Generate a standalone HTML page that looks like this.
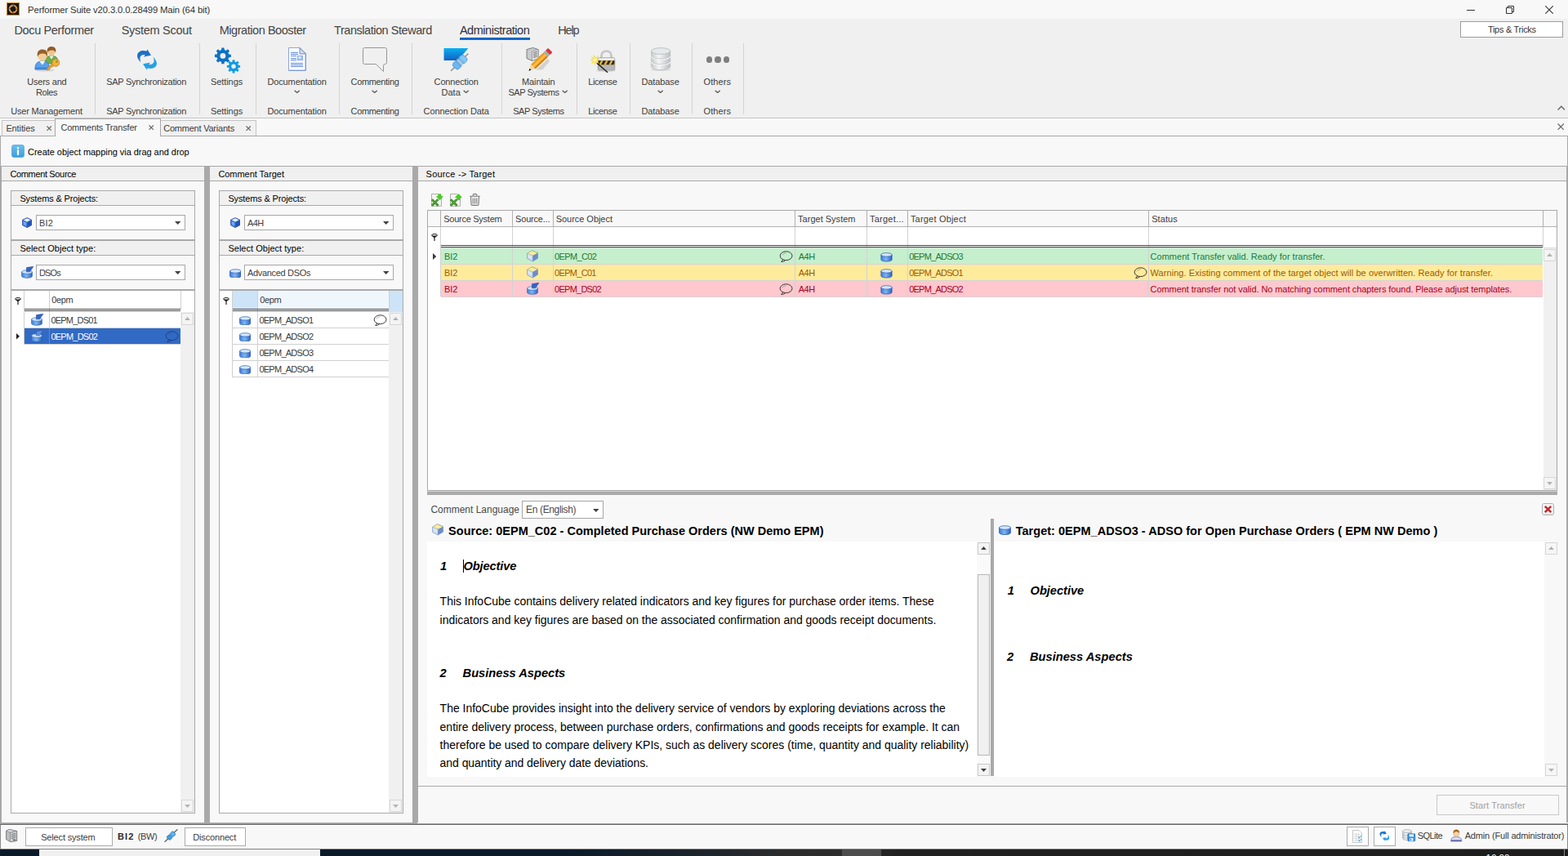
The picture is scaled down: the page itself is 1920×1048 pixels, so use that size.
<!DOCTYPE html>
<html lang="en"><head><meta charset="utf-8"><title>Performer Suite - Comments Transfer</title>
<style>
html,body{margin:0;padding:0;}
body{width:1920px;height:1048px;overflow:hidden;position:relative;background:#f8f8f8;font-family:"Liberation Sans",sans-serif;}
#app{position:absolute;left:0;top:0;width:1920px;height:1048px;overflow:hidden;}
#app div{position:absolute;box-sizing:border-box;}
.t{position:absolute;white-space:pre;line-height:1;display:block;}
.pb{display:inline-block;width:0;height:0;vertical-align:baseline;}
</style></head>
<body>

<svg width="0" height="0" style="position:absolute">
<defs>
<linearGradient id="gBlue" x1="0" y1="0" x2="0" y2="1"><stop offset="0" stop-color="#8fc0f2"/><stop offset="1" stop-color="#2f6fd0"/></linearGradient>
<linearGradient id="gBlueH" x1="0" y1="0" x2="1" y2="0"><stop offset="0" stop-color="#3f7fd8"/><stop offset="0.45" stop-color="#7fb4f0"/><stop offset="1" stop-color="#2c62c0"/></linearGradient>
<linearGradient id="gGrayH" x1="0" y1="0" x2="1" y2="0"><stop offset="0" stop-color="#c9cdd0"/><stop offset="0.4" stop-color="#f4f5f6"/><stop offset="1" stop-color="#b9bec2"/></linearGradient>
<linearGradient id="gSky" x1="0" y1="0" x2="0" y2="1"><stop offset="0" stop-color="#08b0f0"/><stop offset="1" stop-color="#1260c2"/></linearGradient>
<linearGradient id="gInfo" x1="0" y1="0" x2="0" y2="1"><stop offset="0" stop-color="#6cc0ee"/><stop offset="1" stop-color="#3a9ddd"/></linearGradient>
</defs></svg>

<div id="app">
<div style="left:0px;top:0px;width:1920px;height:23px;background:#f8f8f8;"></div>
<svg style="position:absolute;left:8px;top:3px;" width="16" height="16" viewBox="0 0 16 16"><rect x="0.5" y="0.5" width="15" height="15" fill="#15161f" stroke="#c98a2b" stroke-width="1"/><circle cx="8" cy="8" r="4.3" fill="none" stroke="#e0962e" stroke-width="2.2"/><path d="M8 3.2 L10.5 7 M12.6 8 L9 10 M8 12.8 L5.6 9 M3.4 8 L7 6" stroke="#15161f" stroke-width="0.9"/><rect x="6.6" y="6.6" width="2.8" height="2.8" fill="#15161f"/></svg>
<span class="t" style="font-size:11.3px;color:#333;letter-spacing:-0.139px;left:34.10px;top:7.00px;">Performer Suite v20.3.0.0.28499 Main (64 bit)</span>
<div style="left:1796px;top:12px;width:10px;height:1px;background:#333;"></div>
<svg style="position:absolute;left:1844px;top:7px;" width="10" height="10" viewBox="0 0 10 10"><path d="M0.5 2.5 H7.5 V9.5 H0.5 Z M2.5 2.5 V0.5 H9.5 V7.5 H7.5" fill="none" stroke="#333" stroke-width="1"/></svg>
<svg style="position:absolute;left:1892px;top:7px;" width="10" height="10" viewBox="0 0 10 10"><path d="M0.3 0.3 L9.7 9.7 M9.7 0.3 L0.3 9.7" fill="none" stroke="#333" stroke-width="1.1"/></svg>
<div style="left:0px;top:23px;width:1920px;height:121px;background:#f0f0f0;"></div>
<span class="t" style="font-size:14.5px;color:#444;letter-spacing:-0.350px;left:17.40px;top:30.00px;">Docu Performer</span>
<span class="t" style="font-size:14.5px;color:#444;letter-spacing:-0.287px;left:148.70px;top:30.00px;">System Scout</span>
<span class="t" style="font-size:14.5px;color:#444;letter-spacing:-0.446px;left:268.70px;top:30.00px;">Migration Booster</span>
<span class="t" style="font-size:14.5px;color:#444;letter-spacing:-0.462px;left:409.10px;top:30.00px;">Translation Steward</span>
<span class="t" style="font-size:14.5px;color:#2f2f3a;letter-spacing:-0.460px;left:562.90px;top:30.00px;">Administration</span>
<span class="t" style="font-size:14.5px;color:#444;letter-spacing:-1.109px;left:683.20px;top:30.00px;">Help</span>
<div style="left:563px;top:46px;width:86px;height:3px;background:#1467c4;"></div>
<div style="left:1788px;top:26px;width:126px;height:20px;background:#fff;border:1px solid #9c9c9c;"></div>
<span class="t" style="font-size:11px;color:#333;letter-spacing:-0.279px;left:1821.90px;top:31.00px;">Tips &amp; Tricks</span>
<div style="left:116px;top:53px;width:1px;height:87px;background:#d4d4d4;"></div>
<div style="left:244px;top:53px;width:1px;height:87px;background:#d4d4d4;"></div>
<div style="left:313px;top:53px;width:1px;height:87px;background:#d4d4d4;"></div>
<div style="left:415px;top:53px;width:1px;height:87px;background:#d4d4d4;"></div>
<div style="left:504px;top:53px;width:1px;height:87px;background:#d4d4d4;"></div>
<div style="left:614px;top:53px;width:1px;height:87px;background:#d4d4d4;"></div>
<div style="left:706px;top:53px;width:1px;height:87px;background:#d4d4d4;"></div>
<div style="left:771px;top:53px;width:1px;height:87px;background:#d4d4d4;"></div>
<div style="left:847px;top:53px;width:1px;height:87px;background:#d4d4d4;"></div>
<div style="left:910px;top:53px;width:1px;height:87px;background:#d4d4d4;"></div>
<svg style="position:absolute;left:41px;top:56px;" width="32" height="32" viewBox="0 0 32 32"><ellipse cx="14" cy="30" rx="12" ry="1.6" fill="#000" opacity="0.10"/><path d="M14 22 C14 14.5 17 12.2 22 12.2 C27.4 12.2 30.4 14.5 30.4 22 Z" fill="#6fae48" stroke="#4f8f30" stroke-width="0.7"/><path d="M19.4 12.4 L22 16.4 L24.8 12.4Z" fill="#f4f4f4"/><ellipse cx="22" cy="7" rx="4.6" ry="5.2" fill="#f0c58c"/><path d="M17 8.2 C15.8 3.2 18.8 0.9 22.2 0.9 C26 0.9 28.4 3.6 27 8.6 C26.4 6.2 25 5.2 22.2 5.4 C19.6 5.6 18 6.2 17 8.2Z" fill="#8f5c26"/><path d="M1.9 29 C1.9 21.5 4.8 18.9 10.8 18.9 C16.8 18.9 19.6 21.5 19.6 29 Z" fill="#5aa2ea" stroke="#2b6fc4" stroke-width="0.8"/><path d="M2.6 26.4 H19 V29 H2.6 Z" fill="#3f86dc"/><path d="M7.4 19 L10.8 23.6 L14.2 19Z" fill="#f8f8f8"/><ellipse cx="10.9" cy="12.6" rx="5.6" ry="6" fill="#f3cd98"/><path d="M5 13.4 C3.6 7.2 7 4.6 11 4.6 C15.4 4.6 18.2 7.6 16.8 13.6 C16 10.6 14.4 9.4 11 9.6 C8 9.8 6.2 10.8 5 13.4Z" fill="#96602a"/><path d="M17 30 L16.4 27.8 L23.4 21.6 L25.6 23.8 L23.4 25.8 L22.4 25 L21.4 27.2 L20.2 26.8 L19.6 28.8 Z" fill="#eea32a" stroke="#b8750f" stroke-width="0.6"/><circle cx="27.3" cy="20.8" r="4.5" fill="#f6b23c" stroke="#c07c16" stroke-width="0.8"/><circle cx="28.4" cy="19.4" r="1.3" fill="#7a9a3a"/></svg>
<span class="t" style="font-size:11px;color:#3c3c3c;letter-spacing:-0.205px;left:33.20px;top:95.00px;">Users and</span>
<span class="t" style="font-size:11px;color:#3c3c3c;letter-spacing:-0.431px;left:44.10px;top:108.00px;">Roles</span>
<span class="t" style="font-size:11px;color:#3c3c3c;letter-spacing:-0.193px;left:13.20px;top:131.00px;">User Management</span>
<svg style="position:absolute;left:167px;top:60px;" width="26" height="26" viewBox="0 0 26 26.2"><path d="M5.5,16.7 C2.5,13.5 0.5,10.5 1,7.5 C1.6,3.6 5.5,1.6 10,2.2 L12.6,2.6 L13.4,0.4 L18,7.9 L8.8,9.6 L10.8,7.3 C7.5,6.6 4.8,8 4.4,10.8 C4.2,12.6 4.6,14.6 5.5,16.7 Z" fill="#1c70c6"/><path d="M5.5,16.7 C2.5,13.5 0.5,10.5 1,7.5 C1.6,3.6 5.5,1.6 10,2.2 L12.6,2.6 L13.4,0.4 L18,7.9 L8.8,9.6 L10.8,7.3 C7.5,6.6 4.8,8 4.4,10.8 C4.2,12.6 4.6,14.6 5.5,16.7 Z" fill="#2b9fe2" transform="rotate(180 13 13.1)"/></svg>
<span class="t" style="font-size:11px;color:#3c3c3c;letter-spacing:-0.280px;left:130.20px;top:95.00px;">SAP Synchronization</span>
<span class="t" style="font-size:11px;color:#3c3c3c;letter-spacing:-0.280px;left:130.20px;top:131.00px;">SAP Synchronization</span>
<svg style="position:absolute;left:262px;top:57.5px;" width="33" height="32" viewBox="0 0 33 32"><path fill-rule="evenodd" d="M18.28,8.57 L20.86,8.74 L20.86,12.06 L18.28,12.23 L17.41,14.32 L19.12,16.27 L16.77,18.62 L14.82,16.91 L12.73,17.78 L12.56,20.36 L9.24,20.36 L9.07,17.78 L6.98,16.91 L5.03,18.62 L2.68,16.27 L4.39,14.32 L3.52,12.23 L0.94,12.06 L0.94,8.74 L3.52,8.57 L4.39,6.48 L2.68,4.53 L5.03,2.18 L6.98,3.89 L9.07,3.02 L9.24,0.44 L12.56,0.44 L12.73,3.02 L14.82,3.89 L16.77,2.18 L19.12,4.53 L17.41,6.48Z M14.30,10.40 A3.4,3.4 0 1,0 7.50,10.40 A3.4,3.4 0 1,0 14.30,10.40Z" fill="#0d71c6"/><path fill-rule="evenodd" d="M29.82,21.85 L32.09,21.95 L32.09,24.65 L29.82,24.75 L29.14,26.39 L30.67,28.07 L28.77,29.97 L27.09,28.44 L25.45,29.12 L25.35,31.39 L22.65,31.39 L22.55,29.12 L20.91,28.44 L19.23,29.97 L17.33,28.07 L18.86,26.39 L18.18,24.75 L15.91,24.65 L15.91,21.95 L18.18,21.85 L18.86,20.21 L17.33,18.53 L19.23,16.63 L20.91,18.16 L22.55,17.48 L22.65,15.21 L25.35,15.21 L25.45,17.48 L27.09,18.16 L28.77,16.63 L30.67,18.53 L29.14,20.21Z M26.70,23.30 A2.7,2.7 0 1,0 21.30,23.30 A2.7,2.7 0 1,0 26.70,23.30Z" fill="#0b9be4"/></svg>
<span class="t" style="font-size:11px;color:#3c3c3c;letter-spacing:-0.064px;left:257.90px;top:95.00px;">Settings</span>
<span class="t" style="font-size:11px;color:#3c3c3c;letter-spacing:-0.064px;left:257.90px;top:131.00px;">Settings</span>
<svg style="position:absolute;left:353px;top:58px;" width="22" height="30" viewBox="0 0 22 30"><path d="M0.5 0.5 H14 L21.5 8 V28.5 H0.5 Z" fill="#fdfdff" stroke="#8fa6d6" stroke-width="1"/><path d="M21 9 V28 H1" fill="none" stroke="#5f86d2" stroke-width="1" opacity="0.7"/><path d="M14 0.5 V8 H21.5 Z" fill="#cfdcf4" stroke="#5a73a8" stroke-width="0.8"/><g fill="#5f8bdc"><rect x="3" y="6" width="9" height="1"/><rect x="3" y="8" width="9" height="1"/><rect x="3" y="10" width="7" height="1"/><rect x="3" y="13" width="7" height="1"/><rect x="3" y="15" width="7" height="1"/><rect x="3" y="19" width="15" height="1"/><rect x="3" y="21" width="15" height="1"/><rect x="3" y="23" width="15" height="1"/></g><rect x="11.2" y="10.2" width="6.6" height="5.6" fill="#9fbcec" stroke="#7f9fe0" stroke-width="0.6"/><rect x="12.4" y="11.2" width="3.2" height="2.6" fill="#e4edfb"/></svg>
<span class="t" style="font-size:11px;color:#3c3c3c;letter-spacing:-0.117px;left:327.40px;top:95.00px;">Documentation</span>
<span class="t" style="font-size:11px;color:#3c3c3c;letter-spacing:-0.117px;left:327.40px;top:131.00px;">Documentation</span>
<svg style="position:absolute;left:360.3px;top:109.5px;" width="7.4" height="4.6" viewBox="0 0 7.4 4.6"><path d="M0.7 0.9 L3.7 3.5 L6.7 0.9" fill="none" stroke="#666" stroke-width="1.4"/></svg>
<svg style="position:absolute;left:444px;top:58px;" width="30" height="31" viewBox="0 0 30 31"><path d="M2.5 0.5 H27.5 Q29.5 0.5 29.5 2.5 V18.5 Q29.5 20.5 27.5 20.5 Q25.5 20.5 25.5 22.5 V29.5 L16.4 20.5 H2.5 Q0.5 20.5 0.5 18.5 V2.5 Q0.5 0.5 2.5 0.5 Z" fill="none" stroke="#969696" stroke-width="1"/></svg>
<span class="t" style="font-size:11px;color:#3c3c3c;letter-spacing:-0.351px;left:429.60px;top:95.00px;">Commenting</span>
<span class="t" style="font-size:11px;color:#3c3c3c;letter-spacing:-0.351px;left:429.60px;top:131.00px;">Commenting</span>
<svg style="position:absolute;left:455.3px;top:109.5px;" width="7.4" height="4.6" viewBox="0 0 7.4 4.6"><path d="M0.7 0.9 L3.7 3.5 L6.7 0.9" fill="none" stroke="#666" stroke-width="1.4"/></svg>
<svg style="position:absolute;left:543px;top:58px;" width="32" height="30" viewBox="0 0 32 30"><path d="M0 0.5 H31.5 L18 16.5 H0 Z" fill="#fdfdfd" opacity="0.7"/><path d="M0.5 1 H30.5 L17.5 16 H0.5 Z" fill="url(#gSky)"/><path d="M9.5 28.5 L13.5 24.5 M26 12 L30 8" stroke="#8d9296" stroke-width="1.6" stroke-linecap="round"/><g transform="rotate(-45 20 18)"><rect x="10.5" y="13.2" width="9" height="10" rx="3.6" fill="#6db7ee" stroke="#4a90cc" stroke-width="0.7"/><rect x="20.5" y="13.2" width="9" height="10" rx="3.6" fill="#86c6f4" stroke="#4a90cc" stroke-width="0.7"/><path d="M17 13.6 V22.8 M23 13.6 V22.8" stroke="#4f97d4" stroke-width="0.8"/><rect x="19.2" y="13" width="1.6" height="10.4" fill="#c8ccd0"/></g></svg>
<span class="t" style="font-size:11px;color:#3c3c3c;letter-spacing:-0.162px;left:531.60px;top:95.00px;">Connection</span>
<span class="t" style="font-size:11px;color:#3c3c3c;letter-spacing:0.050px;left:540.40px;top:108.00px;">Data</span>
<svg style="position:absolute;left:567.3px;top:109.5px;" width="7.4" height="4.6" viewBox="0 0 7.4 4.6"><path d="M0.7 0.9 L3.7 3.5 L6.7 0.9" fill="none" stroke="#666" stroke-width="1.4"/></svg>
<span class="t" style="font-size:11px;color:#3c3c3c;letter-spacing:-0.125px;left:518.60px;top:131.00px;">Connection Data</span>
<svg style="position:absolute;left:644px;top:58px;" width="33" height="31" viewBox="0 0 33 31"><path d="M1 2.6 L8.6 0.4 L15 2.6 V13.6 L7.4 16.4 L1 13.4 Z" fill="#c9cbcd" stroke="#6f7477" stroke-width="0.9"/><path d="M7.4 5 L15 2.6 V13.6 L7.4 16.4 Z" fill="#e9ebec" stroke="#6f7477" stroke-width="0.6"/><path d="M8.8 6.6 L13.8 5.2 M8.8 8.6 L13.8 7.2 M8.8 10.6 L13.8 9.2 M8.8 12.6 L13.8 11.2" stroke="#6a6f72" stroke-width="1"/><path d="M12 27.5 L27 14 L29 17 L20 27.5 Z" fill="#000" opacity="0.13"/><g transform="translate(3.5 28.7) rotate(-43.75)"><path d="M0 0 L7.5 -3.9 V3.9 Z" fill="#ecd7ab"/><path d="M0 0 L2.8 -1.45 V1.45 Z" fill="#1c1c1c"/><rect x="7.5" y="-3.9" width="21" height="7.8" fill="#f59a14"/><rect x="7.5" y="-1.3" width="21" height="2.6" fill="#ffc04a"/><rect x="7.5" y="2.2" width="21" height="1.7" fill="#d97a08"/><rect x="28.5" y="-3.9" width="3.6" height="7.8" fill="#a9acae"/><rect x="32.1" y="-3.9" width="4.4" height="7.8" rx="1.4" fill="#d8363c"/></g></svg>
<span class="t" style="font-size:11px;color:#3c3c3c;letter-spacing:-0.140px;left:639.10px;top:95.00px;">Maintain</span>
<span class="t" style="font-size:11px;color:#3c3c3c;letter-spacing:-0.445px;left:622.40px;top:108.00px;">SAP Systems</span>
<svg style="position:absolute;left:688.3px;top:109.5px;" width="7.4" height="4.6" viewBox="0 0 7.4 4.6"><path d="M0.7 0.9 L3.7 3.5 L6.7 0.9" fill="none" stroke="#666" stroke-width="1.4"/></svg>
<span class="t" style="font-size:11px;color:#3c3c3c;letter-spacing:-0.425px;left:628.20px;top:131.00px;">SAP Systems</span>
<svg style="position:absolute;left:722px;top:60px;" width="32" height="29" viewBox="0 0 32 29"><ellipse cx="20" cy="26.6" rx="12" ry="1.6" fill="#000" opacity="0.10"/><path d="M14.4 12 V8.4 C14.4 4.6 17 2.6 20.5 2.6 C24 2.6 26.6 4.6 26.6 8.4 V12" fill="none" stroke="#c6c8ca" stroke-width="2.8"/><rect x="10.2" y="10.8" width="20.6" height="15" rx="1.2" fill="#b6b8ba" stroke="#909294" stroke-width="0.7"/><rect x="10.6" y="11.2" width="19.8" height="2.6" fill="#f0f0f0"/><rect x="10.6" y="14.2" width="19.8" height="5" fill="#2a2a2a"/><path d="M11.4 19.2 L14 14.2 H16.6 L14 19.2Z M17.4 19.2 L20 14.2 H22.6 L20 19.2Z M23.4 19.2 L26 14.2 H28.6 L26 19.2Z M29.2 19.2 L30.4 16.8 V19.2Z" fill="#f4b81c"/><path d="M9.4 17.6 L21.6 28.2" stroke="#222" stroke-width="1.5" stroke-linecap="round"/><path d="M5.2 7.5 L6 11 L2.2 9.4 L4.8 12.4 L0.8 13.4 L4.8 14.4 L2.6 17.8 L6 15.8 L6.4 19.6 L7.8 16 L11 17.6 L9.2 14.4 L12.4 13.2 L9.2 12.2 L10.6 8.6 L7.6 10.8 Z" fill="#ffe94a" stroke="#ecd02a" stroke-width="0.4"/><circle cx="6.5" cy="13.4" r="1.8" fill="#fff9c4"/></svg>
<span class="t" style="font-size:11px;color:#3c3c3c;letter-spacing:-0.387px;left:720.20px;top:95.00px;">License</span>
<span class="t" style="font-size:11px;color:#3c3c3c;letter-spacing:-0.387px;left:720.20px;top:131.00px;">License</span>
<svg style="position:absolute;left:796.7px;top:58px;" width="25" height="29" viewBox="0 0 25 29"><ellipse cx="12.2" cy="27.6" rx="13" ry="1.4" fill="#000" opacity="0.08"/><path d="M0.7 4.5 V23.6 C0.7 25.9 5.8 27.6 12.2 27.6 C18.6 27.6 23.7 25.9 23.7 23.6 V4.5 Z" fill="url(#gGrayH)" stroke="#b4b9bc" stroke-width="0.8"/><ellipse cx="12.2" cy="4.5" rx="11.5" ry="3.9" fill="#e6e9ea" stroke="#b4b9bc" stroke-width="0.8"/><path d="M0.7 10.8 C0.7 13 5.8 14.8 12.2 14.8 C18.6 14.8 23.7 13 23.7 10.8 M0.7 17.4 C0.7 19.6 5.8 21.4 12.2 21.4 C18.6 21.4 23.7 19.6 23.7 17.4" fill="none" stroke="#fbfbfb" stroke-width="1.2"/><path d="M0.7 10 C0.7 12.2 5.8 14 12.2 14 C18.6 14 23.7 12.2 23.7 10 M0.7 16.6 C0.7 18.8 5.8 20.6 12.2 20.6 C18.6 20.6 23.7 18.8 23.7 16.6" fill="none" stroke="#b4b9bc" stroke-width="0.7"/></svg>
<span class="t" style="font-size:11px;color:#3c3c3c;letter-spacing:-0.099px;left:785.40px;top:95.00px;">Database</span>
<span class="t" style="font-size:11px;color:#3c3c3c;letter-spacing:-0.099px;left:785.40px;top:131.00px;">Database</span>
<svg style="position:absolute;left:805.3px;top:109.5px;" width="7.4" height="4.6" viewBox="0 0 7.4 4.6"><path d="M0.7 0.9 L3.7 3.5 L6.7 0.9" fill="none" stroke="#666" stroke-width="1.4"/></svg>
<div style="left:865.1999999999999px;top:69.4px;width:7.2px;height:7.2px;background:#7f7f7f;border-radius:50%;"></div>
<div style="left:875.4px;top:69.4px;width:7.2px;height:7.2px;background:#7f7f7f;border-radius:50%;"></div>
<div style="left:885.6px;top:69.4px;width:7.2px;height:7.2px;background:#7f7f7f;border-radius:50%;"></div>
<span class="t" style="font-size:11px;color:#3c3c3c;letter-spacing:0.077px;left:861.60px;top:95.00px;">Others</span>
<span class="t" style="font-size:11px;color:#3c3c3c;letter-spacing:0.077px;left:861.60px;top:131.00px;">Others</span>
<svg style="position:absolute;left:875.3px;top:109.5px;" width="7.4" height="4.6" viewBox="0 0 7.4 4.6"><path d="M0.7 0.9 L3.7 3.5 L6.7 0.9" fill="none" stroke="#666" stroke-width="1.4"/></svg>
<svg style="position:absolute;left:1906.5px;top:128.6px;" width="9.6" height="6.4" viewBox="0 0 9.6 6.4"><path d="M0.6 5.4 L4.8 1.2 L9 5.4" fill="none" stroke="#666" stroke-width="1.4"/></svg>
<div style="left:0px;top:144px;width:1920px;height:1px;background:#c6c6c6;"></div>
<div style="left:0px;top:145px;width:1920px;height:21px;background:#f8f8f8;"></div>
<div style="left:0px;top:166px;width:1920px;height:1px;background:#a8a8a8;"></div>
<div style="left:2px;top:147px;width:66px;height:20px;background:#f1f1f1;border:1px solid #c4c4c4;border-bottom:none;height:19px;"></div>
<span class="t" style="font-size:11px;color:#3c3c3c;letter-spacing:-0.111px;left:7.40px;top:152.00px;">Entities</span>
<svg style="position:absolute;left:56.5px;top:154px;" width="6.4" height="6.4" viewBox="0 0 6.4 6.4"><path d="M0.5 0.5 L5.9 5.9 M5.9 0.5 L0.5 5.9" fill="none" stroke="#666" stroke-width="1.1"/></svg>
<div style="left:196px;top:147px;width:118px;height:20px;background:#f1f1f1;border:1px solid #c4c4c4;border-bottom:none;height:19px;"></div>
<span class="t" style="font-size:11px;color:#3c3c3c;letter-spacing:-0.219px;left:200.20px;top:152.00px;">Comment Variants</span>
<svg style="position:absolute;left:301.2px;top:154px;" width="6.4" height="6.4" viewBox="0 0 6.4 6.4"><path d="M0.5 0.5 L5.9 5.9 M5.9 0.5 L0.5 5.9" fill="none" stroke="#666" stroke-width="1.1"/></svg>
<div style="left:67px;top:145px;width:130px;height:22px;background:#f8f8f8;border:1px solid #a8a8a8;border-bottom:none;"></div>
<span class="t" style="font-size:11px;color:#3c3c3c;letter-spacing:-0.187px;left:74.40px;top:151.00px;">Comments Transfer</span>
<svg style="position:absolute;left:182.4px;top:153px;" width="6.4" height="6.4" viewBox="0 0 6.4 6.4"><path d="M0.5 0.5 L5.9 5.9 M5.9 0.5 L0.5 5.9" fill="none" stroke="#666" stroke-width="1.1"/></svg>
<svg style="position:absolute;left:1907px;top:151px;" width="8.4" height="8.4" viewBox="0 0 8.4 8.4"><path d="M0.5 0.5 L7.9 7.9 M7.9 0.5 L0.5 7.9" fill="none" stroke="#666" stroke-width="1.2"/></svg>
<div style="left:0px;top:167px;width:1920px;height:842px;background:#f8f8f8;"></div>
<div style="left:0px;top:167px;width:1px;height:842px;background:#a8a8a8;"></div>
<div style="left:1919px;top:167px;width:1px;height:842px;background:#a8a8a8;"></div>
<svg style="position:absolute;left:14px;top:177px;" width="16" height="16" viewBox="0 0 16 16"><rect x="0.5" y="0.5" width="15" height="15" rx="2.5" fill="url(#gInfo)" stroke="#3a97d6" stroke-width="0.6"/><rect x="6.9" y="6.6" width="2.2" height="6.2" fill="#fff"/><rect x="6.9" y="3.2" width="2.2" height="2.2" fill="#fff"/></svg>
<span class="t" style="font-size:11px;color:#000;letter-spacing:-0.046px;left:34.10px;top:181.00px;">Create object mapping via drag and drop</span>
<div style="left:1px;top:203px;width:1918px;height:1px;background:#a9a9a9;"></div>
<div style="left:2px;top:204px;width:248px;height:17px;background:#f0f0f0;"></div>
<div style="left:2px;top:221px;width:248px;height:1px;background:#a9a9a9;"></div>
<span class="t" style="font-size:11px;color:#000;letter-spacing:-0.346px;left:12.40px;top:208.00px;">Comment Source</span>
<div style="left:257px;top:204px;width:248px;height:17px;background:#f0f0f0;"></div>
<div style="left:257px;top:221px;width:248px;height:1px;background:#a9a9a9;"></div>
<span class="t" style="font-size:11px;color:#000;letter-spacing:-0.039px;left:267.40px;top:208.00px;">Comment Target</span>
<div style="left:512px;top:204px;width:1406px;height:17px;background:#f0f0f0;"></div>
<div style="left:512px;top:221px;width:1406px;height:1px;background:#a9a9a9;"></div>
<span class="t" style="font-size:11px;color:#000;letter-spacing:0.197px;left:521.60px;top:208.00px;">Source -&gt; Target</span>
<div style="left:1px;top:204px;width:1px;height:803px;background:#a9a9a9;"></div>
<div style="left:250px;top:204px;width:7px;height:803px;background:#a9a9a9;"></div>
<div style="left:505px;top:204px;width:7px;height:803px;background:#a9a9a9;"></div>
<div style="left:1918px;top:204px;width:1px;height:803px;background:#a9a9a9;"></div>
<div style="left:0px;top:1007px;width:511px;height:1px;background:#aaaaaa;"></div>
<div style="left:511px;top:1007px;width:1409px;height:1px;background:#fbfbfb;"></div>
<div style="left:0px;top:1008px;width:1920px;height:1px;background:#9c9c9c;"></div>
<div style="left:0px;top:1009px;width:1920px;height:1px;background:#6c6c6c;"></div>
<div style="left:512px;top:962px;width:1406px;height:1px;background:#a9a9a9;"></div>
<div style="left:13px;top:233px;width:226px;height:61px;border:1px solid #a9a9a9;"></div>
<div style="left:14px;top:234px;width:224px;height:17px;background:#f0f0f0;"></div>
<div style="left:14px;top:251px;width:224px;height:1px;background:#a9a9a9;"></div>
<span class="t" style="font-size:11px;color:#000;letter-spacing:-0.146px;left:24.40px;top:238.00px;">Systems &amp; Projects:</span>
<svg style="position:absolute;left:26.5px;top:265.5px;" width="12.2" height="13.2" viewBox="0 0 13 14"><path d="M6.5 0.7 L12.3 3.3 V10.3 L6.5 13.3 L0.7 10.3 V3.3 Z" fill="#2b62c6" stroke="#1d3f96" stroke-width="0.9" stroke-linejoin="round"/><path d="M6.5 1.2 L11.6 3.5 L6.5 6 L1.4 3.5 Z" fill="#c4defa"/><path d="M6.5 1.8 L9.6 3.3 L6.5 4.8 L3.4 3.3 Z" fill="#f2f8ff"/><path d="M1.3 4.2 L6.1 6.6 V12.5 L1.3 10 Z" fill="#4d90ea"/><path d="M2.2 5.8 L5.2 7.3 V10.6 L2.2 9.1 Z" fill="#7fb6f6" opacity="0.8"/><path d="M6.9 6.6 L11.7 4.2 V10 L6.9 12.5 Z" fill="#2454b4"/></svg>
<div style="left:44px;top:263px;width:183px;height:19px;background:#fff;border:1px solid #a6a6a6;"></div>
<span class="t" style="font-size:11px;color:#404040;letter-spacing:0.292px;left:47.90px;top:268.00px;">BI2</span>
<svg style="position:absolute;left:213.8px;top:271px;" width="7.4" height="4" viewBox="0 0 7.4 4"><path d="M0 0 H7.4 L3.7 4 Z" fill="#404040"/></svg>
<div style="left:13px;top:293px;width:226px;height:62px;border:1px solid #a9a9a9;"></div>
<div style="left:13px;top:294px;width:226px;height:1px;background:#a9a9a9;"></div>
<div style="left:14px;top:295px;width:224px;height:17px;background:#f0f0f0;"></div>
<div style="left:14px;top:312px;width:224px;height:1px;background:#a9a9a9;"></div>
<span class="t" style="font-size:11px;color:#000;letter-spacing:0.026px;left:24.40px;top:299.00px;">Select Object type:</span>
<svg style="position:absolute;left:25.5px;top:325.5px;" width="16" height="15" viewBox="0 0 16 15"><path d="M0.6 7 V12 C0.6 13.3 3.4 14.3 7 14.3 C10.6 14.3 13.4 13.3 13.4 12 V7 Z" fill="url(#gBlueH)" stroke="#2c5db4" stroke-width="0.7"/><ellipse cx="7" cy="7" rx="6.4" ry="2.3" fill="#cfe3fa" stroke="#3b6fc4" stroke-width="0.7"/><path d="M6.4 1.6 L15 0.2 L10.6 6.8 H6.4 Z" fill="#3465c4" stroke="#27499a" stroke-width="0.5"/></svg>
<div style="left:44px;top:324px;width:183px;height:19px;background:#fff;border:1px solid #a6a6a6;"></div>
<span class="t" style="font-size:11px;color:#404040;letter-spacing:-0.848px;left:47.90px;top:329.00px;">DSOs</span>
<svg style="position:absolute;left:213.8px;top:332px;" width="7.4" height="4" viewBox="0 0 7.4 4"><path d="M0 0 H7.4 L3.7 4 Z" fill="#404040"/></svg>
<div style="left:13px;top:354px;width:226px;height:642px;background:#fff;border:1px solid #a9a9a9;"></div>
<div style="left:13px;top:355px;width:226px;height:1px;background:#a9a9a9;"></div>
<svg style="position:absolute;left:17.6px;top:364px;" width="8" height="10" viewBox="0 0 8 10"><ellipse cx="4" cy="2" rx="3.4" ry="1.5" fill="#fff" stroke="#222" stroke-width="1"/><path d="M0.8 2.4 L3.4 5.2 V9 H4.6 V5.2 L7.2 2.4 Z" fill="#222"/></svg>
<div style="left:29px;top:356px;width:1px;height:66px;background:#d0d0d0;"></div>
<div style="left:60px;top:356px;width:1px;height:66px;background:#d0d0d0;"></div>
<div style="left:221px;top:356px;width:1px;height:23px;background:#d0d0d0;"></div>
<span class="t" style="font-size:11px;color:#3a3a3a;letter-spacing:-0.344px;left:63.20px;top:362.00px;">0epm</span>
<div style="left:30px;top:378px;width:191px;height:1px;background:#484848;"></div>
<div style="left:30px;top:380px;width:191px;height:1px;background:#484848;"></div>
<div style="left:221px;top:382px;width:17px;height:613px;background:#f0f0f0;"></div>
<div style="left:222px;top:383px;width:15px;height:15px;background:#f4f4f4;border:1px solid #d6d6d6;"></div>
<svg style="position:absolute;left:226px;top:387.8px;" width="7" height="4.2" viewBox="0 0 7 4.2"><path d="M0 4.2 H7 L3.5 0 Z" fill="#b0b0b0"/></svg>
<div style="left:222px;top:979px;width:15px;height:15px;background:#f4f4f4;border:1px solid #d6d6d6;"></div>
<svg style="position:absolute;left:226px;top:985px;" width="7" height="4" viewBox="0 0 7 4"><path d="M0 0 H7 L3.5 4 Z" fill="#b4b4b4"/></svg>
<div style="left:29px;top:401px;width:192px;height:1px;background:#d0d0d0;"></div>
<svg style="position:absolute;left:38px;top:384px;" width="16" height="15" viewBox="0 0 16 15"><path d="M0.6 7 V12 C0.6 13.3 3.4 14.3 7 14.3 C10.6 14.3 13.4 13.3 13.4 12 V7 Z" fill="url(#gBlueH)" stroke="#2c5db4" stroke-width="0.7"/><ellipse cx="7" cy="7" rx="6.4" ry="2.3" fill="#cfe3fa" stroke="#3b6fc4" stroke-width="0.7"/><path d="M6.4 1.6 L15 0.2 L10.6 6.8 H6.4 Z" fill="#3465c4" stroke="#27499a" stroke-width="0.5"/></svg>
<span class="t" style="font-size:11px;color:#3a3a3a;letter-spacing:-0.787px;left:62.40px;top:387.00px;">0EPM_DS01</span>
<div style="left:30px;top:402px;width:191px;height:20px;background:#316ac5;"></div>
<div style="left:60px;top:402px;width:1px;height:20px;background:#5a88d4;"></div>
<svg style="position:absolute;left:20px;top:408.3px;" width="4" height="7.4" viewBox="0 0 4 7.4"><path d="M0 0 V7.4 L4 3.7 Z" fill="#222"/></svg>
<div style="left:29px;top:421px;width:192px;height:1px;background:#d0d0d0;"></div>
<svg style="position:absolute;left:38px;top:404px;" width="16" height="15" viewBox="0 0 16 15"><path d="M0.6 7 V12 C0.6 13.3 3.4 14.3 7 14.3 C10.6 14.3 13.4 13.3 13.4 12 V7 Z" fill="url(#gBlueH)" stroke="#2c5db4" stroke-width="0.7"/><ellipse cx="7" cy="7" rx="6.4" ry="2.3" fill="#cfe3fa" stroke="#3b6fc4" stroke-width="0.7"/><path d="M6.4 1.6 L15 0.2 L10.6 6.8 H6.4 Z" fill="#5f8fe0" stroke="#27499a" stroke-width="0.5"/></svg>
<span class="t" style="font-size:11px;color:#fff;letter-spacing:-0.762px;left:62.40px;top:407.00px;">0EPM_DS02</span>
<svg style="position:absolute;left:202px;top:405.4px;" width="17" height="14" viewBox="0 0 17 14"><ellipse cx="8.6" cy="6.2" rx="7.4" ry="5.4" fill="none" stroke="#1f3f7f" stroke-width="1"/><path d="M4.6 10.6 C4.4 12 3.6 12.8 2.6 13.4 C5 13.6 6.6 12.8 7.8 11.6" fill="none" stroke="#1f3f7f" stroke-width="1"/><path d="M4 5.4 C4.8 3.6 6.6 2.8 8.6 2.8" fill="none" stroke="#1f3f7f" stroke-width="0.6" opacity="0.6"/></svg>
<div style="left:268px;top:233px;width:226px;height:61px;border:1px solid #a9a9a9;"></div>
<div style="left:269px;top:234px;width:224px;height:17px;background:#f0f0f0;"></div>
<div style="left:269px;top:251px;width:224px;height:1px;background:#a9a9a9;"></div>
<span class="t" style="font-size:11px;color:#000;letter-spacing:-0.146px;left:279.40px;top:238.00px;">Systems &amp; Projects:</span>
<svg style="position:absolute;left:281.5px;top:265.5px;" width="12.2" height="13.2" viewBox="0 0 13 14"><path d="M6.5 0.7 L12.3 3.3 V10.3 L6.5 13.3 L0.7 10.3 V3.3 Z" fill="#2b62c6" stroke="#1d3f96" stroke-width="0.9" stroke-linejoin="round"/><path d="M6.5 1.2 L11.6 3.5 L6.5 6 L1.4 3.5 Z" fill="#c4defa"/><path d="M6.5 1.8 L9.6 3.3 L6.5 4.8 L3.4 3.3 Z" fill="#f2f8ff"/><path d="M1.3 4.2 L6.1 6.6 V12.5 L1.3 10 Z" fill="#4d90ea"/><path d="M2.2 5.8 L5.2 7.3 V10.6 L2.2 9.1 Z" fill="#7fb6f6" opacity="0.8"/><path d="M6.9 6.6 L11.7 4.2 V10 L6.9 12.5 Z" fill="#2454b4"/></svg>
<div style="left:299px;top:263px;width:183px;height:19px;background:#fff;border:1px solid #a6a6a6;"></div>
<span class="t" style="font-size:11px;color:#404040;letter-spacing:-0.503px;left:302.90px;top:268.00px;">A4H</span>
<svg style="position:absolute;left:468.8px;top:271px;" width="7.4" height="4" viewBox="0 0 7.4 4"><path d="M0 0 H7.4 L3.7 4 Z" fill="#404040"/></svg>
<div style="left:268px;top:293px;width:226px;height:62px;border:1px solid #a9a9a9;"></div>
<div style="left:268px;top:294px;width:226px;height:1px;background:#a9a9a9;"></div>
<div style="left:269px;top:295px;width:224px;height:17px;background:#f0f0f0;"></div>
<div style="left:269px;top:312px;width:224px;height:1px;background:#a9a9a9;"></div>
<span class="t" style="font-size:11px;color:#000;letter-spacing:0.026px;left:279.40px;top:299.00px;">Select Object type:</span>
<svg style="position:absolute;left:280.8px;top:328.6px;" width="14.6" height="11.8" viewBox="0 0 15 12"><path d="M0.6 3 V9.2 C0.6 10.6 3.6 11.5 7.5 11.5 C11.4 11.5 14.4 10.6 14.4 9.2 V3 Z" fill="url(#gBlueH)" stroke="#2455b0" stroke-width="0.8"/><ellipse cx="7.5" cy="3" rx="6.9" ry="2.3" fill="#d6e7fb" stroke="#3468c0" stroke-width="0.8"/></svg>
<div style="left:299px;top:324px;width:183px;height:19px;background:#fff;border:1px solid #a6a6a6;"></div>
<span class="t" style="font-size:11px;color:#404040;letter-spacing:-0.311px;left:302.90px;top:329.00px;">Advanced DSOs</span>
<svg style="position:absolute;left:468.8px;top:332px;" width="7.4" height="4" viewBox="0 0 7.4 4"><path d="M0 0 H7.4 L3.7 4 Z" fill="#404040"/></svg>
<div style="left:268px;top:354px;width:226px;height:642px;background:#fff;border:1px solid #a9a9a9;"></div>
<div style="left:268px;top:355px;width:226px;height:1px;background:#a9a9a9;"></div>
<div style="left:285px;top:356px;width:30px;height:23px;background:#cde3f7;"></div>
<div style="left:316px;top:356px;width:160px;height:23px;background:#eff7fd;"></div>
<div style="left:476px;top:356px;width:17px;height:26px;background:#cde3f7;"></div>
<svg style="position:absolute;left:272.6px;top:364px;" width="8" height="10" viewBox="0 0 8 10"><ellipse cx="4" cy="2" rx="3.4" ry="1.5" fill="#fff" stroke="#222" stroke-width="1"/><path d="M0.8 2.4 L3.4 5.2 V9 H4.6 V5.2 L7.2 2.4 Z" fill="#222"/></svg>
<div style="left:284px;top:356px;width:1px;height:106px;background:#d0d0d0;"></div>
<div style="left:315px;top:356px;width:1px;height:106px;background:#d0d0d0;"></div>
<div style="left:476px;top:356px;width:1px;height:23px;background:#d0d0d0;"></div>
<span class="t" style="font-size:11px;color:#3a3a3a;letter-spacing:-0.344px;left:318.20px;top:362.00px;">0epm</span>
<div style="left:285px;top:378px;width:191px;height:1px;background:#484848;"></div>
<div style="left:285px;top:380px;width:191px;height:1px;background:#484848;"></div>
<div style="left:476px;top:382px;width:17px;height:613px;background:#f0f0f0;"></div>
<div style="left:477px;top:383px;width:15px;height:15px;background:#f4f4f4;border:1px solid #d6d6d6;"></div>
<svg style="position:absolute;left:481px;top:387.8px;" width="7" height="4.2" viewBox="0 0 7 4.2"><path d="M0 4.2 H7 L3.5 0 Z" fill="#b0b0b0"/></svg>
<div style="left:477px;top:979px;width:15px;height:15px;background:#f4f4f4;border:1px solid #d6d6d6;"></div>
<svg style="position:absolute;left:481px;top:985px;" width="7" height="4" viewBox="0 0 7 4"><path d="M0 0 H7 L3.5 4 Z" fill="#b4b4b4"/></svg>
<div style="left:284px;top:401px;width:192px;height:1px;background:#d0d0d0;"></div>
<svg style="position:absolute;left:293px;top:386.5px;" width="14.4" height="11.5" viewBox="0 0 15 12"><path d="M0.6 3 V9.2 C0.6 10.6 3.6 11.5 7.5 11.5 C11.4 11.5 14.4 10.6 14.4 9.2 V3 Z" fill="url(#gBlueH)" stroke="#2455b0" stroke-width="0.8"/><ellipse cx="7.5" cy="3" rx="6.9" ry="2.3" fill="#d6e7fb" stroke="#3468c0" stroke-width="0.8"/></svg>
<span class="t" style="font-size:11px;color:#3a3a3a;letter-spacing:-0.742px;left:317.40px;top:387.00px;">0EPM_ADSO1</span>
<svg style="position:absolute;left:457px;top:385.4px;" width="17" height="14" viewBox="0 0 17 14"><ellipse cx="8.6" cy="6.2" rx="7.4" ry="5.4" fill="none" stroke="#3a3a3a" stroke-width="1"/><path d="M4.6 10.6 C4.4 12 3.6 12.8 2.6 13.4 C5 13.6 6.6 12.8 7.8 11.6" fill="none" stroke="#3a3a3a" stroke-width="1"/><path d="M4 5.4 C4.8 3.6 6.6 2.8 8.6 2.8" fill="none" stroke="#3a3a3a" stroke-width="0.6" opacity="0.6"/></svg>
<div style="left:284px;top:421px;width:192px;height:1px;background:#d0d0d0;"></div>
<svg style="position:absolute;left:293px;top:406.5px;" width="14.4" height="11.5" viewBox="0 0 15 12"><path d="M0.6 3 V9.2 C0.6 10.6 3.6 11.5 7.5 11.5 C11.4 11.5 14.4 10.6 14.4 9.2 V3 Z" fill="url(#gBlueH)" stroke="#2455b0" stroke-width="0.8"/><ellipse cx="7.5" cy="3" rx="6.9" ry="2.3" fill="#d6e7fb" stroke="#3468c0" stroke-width="0.8"/></svg>
<span class="t" style="font-size:11px;color:#3a3a3a;letter-spacing:-0.742px;left:317.40px;top:407.00px;">0EPM_ADSO2</span>
<div style="left:284px;top:441px;width:192px;height:1px;background:#d0d0d0;"></div>
<svg style="position:absolute;left:293px;top:426.5px;" width="14.4" height="11.5" viewBox="0 0 15 12"><path d="M0.6 3 V9.2 C0.6 10.6 3.6 11.5 7.5 11.5 C11.4 11.5 14.4 10.6 14.4 9.2 V3 Z" fill="url(#gBlueH)" stroke="#2455b0" stroke-width="0.8"/><ellipse cx="7.5" cy="3" rx="6.9" ry="2.3" fill="#d6e7fb" stroke="#3468c0" stroke-width="0.8"/></svg>
<span class="t" style="font-size:11px;color:#3a3a3a;letter-spacing:-0.742px;left:317.40px;top:427.00px;">0EPM_ADSO3</span>
<div style="left:284px;top:461px;width:192px;height:1px;background:#d0d0d0;"></div>
<svg style="position:absolute;left:293px;top:446.5px;" width="14.4" height="11.5" viewBox="0 0 15 12"><path d="M0.6 3 V9.2 C0.6 10.6 3.6 11.5 7.5 11.5 C11.4 11.5 14.4 10.6 14.4 9.2 V3 Z" fill="url(#gBlueH)" stroke="#2455b0" stroke-width="0.8"/><ellipse cx="7.5" cy="3" rx="6.9" ry="2.3" fill="#d6e7fb" stroke="#3468c0" stroke-width="0.8"/></svg>
<span class="t" style="font-size:11px;color:#3a3a3a;letter-spacing:-0.742px;left:317.40px;top:447.00px;">0EPM_ADSO4</span>
<svg style="position:absolute;left:527.6px;top:237px;" width="15" height="16" viewBox="0 0 15 16"><path d="M0.5 0.5 H8.6 L12.5 4.2 V15.3 H0.5 Z" fill="#f4f4f4" stroke="#a6a6a6" stroke-width="0.9"/><path d="M0.8 7.2 L8.6 14.8 M8.4 7.2 L0.8 14.8" stroke="#2a7d14" stroke-width="2.6"/><path d="M0.8 7.2 L8.6 14.8 M8.4 7.2 L0.8 14.8" stroke="#5cb03a" stroke-width="1.1"/><path d="M6.4 3.6 H8.6 V0.8 H12 V3.6 H14.4 L10.4 7.8 Z" fill="#48d018" stroke="#2fa81a" stroke-width="0.5"/></svg>
<svg style="position:absolute;left:550.6px;top:237px;" width="15" height="16" viewBox="0 0 15 16"><path d="M0.5 0.5 H8.6 L12.5 4.2 V15.3 H0.5 Z" fill="#f4f4f4" stroke="#a6a6a6" stroke-width="0.9"/><path d="M0.8 7.2 L8.6 14.8 M8.4 7.2 L0.8 14.8" stroke="#2a7d14" stroke-width="2.6"/><path d="M0.8 7.2 L8.6 14.8 M8.4 7.2 L0.8 14.8" stroke="#5cb03a" stroke-width="1.1"/><path d="M6.4 4.6 L10.4 0.6 L14.4 4.6 H12 V7.6 H8.6 V4.6 Z" fill="#48d018" stroke="#2fa81a" stroke-width="0.5"/></svg>
<svg style="position:absolute;left:575px;top:237px;" width="13" height="15" viewBox="0 0 13 15"><path d="M0.4 3.4 H12.6 M4.2 3 V1.6 Q4.2 0.6 5.2 0.6 H7.8 Q8.8 0.6 8.8 1.6 V3" fill="none" stroke="#7c7c7c" stroke-width="1.1"/><path d="M1.5 3.8 L2 13.4 Q2.1 14.4 3.1 14.4 H9.9 Q10.9 14.4 11 13.4 L11.5 3.8" fill="#f2f2f2" stroke="#7c7c7c" stroke-width="1.1"/><path d="M4.2 5.6 V12.4 M6.5 5.6 V12.4 M8.8 5.6 V12.4" stroke="#7c7c7c" stroke-width="1.1"/></svg>
<div style="left:523px;top:257px;width:1384px;height:344px;background:#fff;border:1px solid #a8a8a8;"></div>
<div style="left:524px;top:258px;width:1382px;height:19px;background:#f8f8f8;"></div>
<div style="left:524px;top:277px;width:1382px;height:1px;background:#b0b0b0;"></div>
<div style="left:539px;top:258px;width:1px;height:19px;background:#b0b0b0;"></div>
<div style="left:627px;top:258px;width:1px;height:19px;background:#b0b0b0;"></div>
<div style="left:677px;top:258px;width:1px;height:19px;background:#b0b0b0;"></div>
<div style="left:973px;top:258px;width:1px;height:19px;background:#b0b0b0;"></div>
<div style="left:1061px;top:258px;width:1px;height:19px;background:#b0b0b0;"></div>
<div style="left:1111px;top:258px;width:1px;height:19px;background:#b0b0b0;"></div>
<div style="left:1406px;top:258px;width:1px;height:19px;background:#b0b0b0;"></div>
<div style="left:1889px;top:258px;width:1px;height:19px;background:#b0b0b0;"></div>
<div style="left:539px;top:278px;width:1px;height:85px;background:#d2d2d2;"></div>
<div style="left:627px;top:278px;width:1px;height:85px;background:#d2d2d2;"></div>
<div style="left:677px;top:278px;width:1px;height:85px;background:#d2d2d2;"></div>
<div style="left:973px;top:278px;width:1px;height:85px;background:#d2d2d2;"></div>
<div style="left:1061px;top:278px;width:1px;height:85px;background:#d2d2d2;"></div>
<div style="left:1111px;top:278px;width:1px;height:85px;background:#d2d2d2;"></div>
<div style="left:1406px;top:278px;width:1px;height:85px;background:#d2d2d2;"></div>
<div style="left:1889px;top:278px;width:1px;height:25px;background:#d2d2d2;"></div>
<span class="t" style="font-size:11px;color:#3c3c3c;letter-spacing:-0.258px;left:543.20px;top:263.00px;">Source System</span>
<span class="t" style="font-size:11px;color:#3c3c3c;letter-spacing:-0.204px;left:631.10px;top:263.00px;">Source...</span>
<span class="t" style="font-size:11px;color:#3c3c3c;letter-spacing:-0.034px;left:680.70px;top:263.00px;">Source Object</span>
<span class="t" style="font-size:11px;color:#3c3c3c;letter-spacing:0.007px;left:977.10px;top:263.00px;">Target System</span>
<span class="t" style="font-size:11px;color:#3c3c3c;letter-spacing:0.256px;left:1064.90px;top:263.00px;">Target...</span>
<span class="t" style="font-size:11px;color:#3c3c3c;letter-spacing:0.198px;left:1114.90px;top:263.00px;">Target Object</span>
<span class="t" style="font-size:11px;color:#3c3c3c;letter-spacing:0.083px;left:1410.20px;top:263.00px;">Status</span>
<svg style="position:absolute;left:527.6px;top:286.3px;" width="8" height="10" viewBox="0 0 8 10"><ellipse cx="4" cy="2" rx="3.4" ry="1.5" fill="#fff" stroke="#222" stroke-width="1"/><path d="M0.8 2.4 L3.4 5.2 V9 H4.6 V5.2 L7.2 2.4 Z" fill="#222"/></svg>
<div style="left:540px;top:300px;width:1349px;height:1px;background:#484848;"></div>
<div style="left:540px;top:302px;width:1349px;height:1px;background:#484848;"></div>
<div style="left:540px;top:303px;width:1349px;height:1px;background:#d6d6d6;"></div>
<div style="left:1890px;top:303px;width:16px;height:297px;background:#f0f0f0;"></div>
<div style="left:1890px;top:303px;width:16px;height:1px;background:#dcdcdc;"></div>
<div style="left:1890px;top:305px;width:15px;height:15px;background:#f4f4f4;border:1px solid #d6d6d6;"></div>
<svg style="position:absolute;left:1894px;top:309.7px;" width="7" height="4.2" viewBox="0 0 7 4.2"><path d="M0 4.2 H7 L3.5 0 Z" fill="#b0b0b0"/></svg>
<div style="left:1890px;top:584px;width:15px;height:15px;background:#f4f4f4;border:1px solid #d6d6d6;"></div>
<svg style="position:absolute;left:1894px;top:590px;" width="7" height="4" viewBox="0 0 7 4"><path d="M0 0 H7 L3.5 4 Z" fill="#b4b4b4"/></svg>
<div style="left:540px;top:304px;width:1349px;height:19px;background:#c6efce;"></div>
<div style="left:540px;top:323px;width:1349px;height:1px;background:#d4d4d4;"></div>
<div style="left:627px;top:304px;width:1px;height:19px;background:#d2d2d2;"></div>
<div style="left:677px;top:304px;width:1px;height:19px;background:#d2d2d2;"></div>
<div style="left:973px;top:304px;width:1px;height:19px;background:#d2d2d2;"></div>
<div style="left:1061px;top:304px;width:1px;height:19px;background:#d2d2d2;"></div>
<div style="left:1111px;top:304px;width:1px;height:19px;background:#d2d2d2;"></div>
<div style="left:1406px;top:304px;width:1px;height:19px;background:#d2d2d2;"></div>
<span class="t" style="font-size:11px;color:#1f7a33;letter-spacing:-0.058px;left:544.10px;top:309.00px;">BI2</span>
<svg style="position:absolute;left:644.5px;top:306px;" width="14.2" height="14.6" viewBox="0 0 15 15"><path d="M7 0.6 L14.2 3.4 V10.6 L7.6 14.6 L0.8 11 V4 Z" fill="#9fb4d2" stroke="#6f8cc0" stroke-width="0.8" stroke-linejoin="round"/><path d="M7 0.8 L14 3.5 L7.6 7 L1 4.1 Z" fill="#efe06c"/><path d="M3.2 3.2 L9.8 6 M5.4 2.2 L12 4.8" stroke="#fffbd6" stroke-width="1"/><path d="M1 4.4 L7.4 7.3 V14.2 L1 10.9 Z" fill="#c9d8ec"/><path d="M2 6 L6.4 8 V11.6 L2 9.4 Z" fill="#e2ebf6" opacity="0.8"/><path d="M7.8 7.3 L14 3.9 V10.5 L7.8 14.2 Z" fill="#6f8cc4"/></svg>
<span class="t" style="font-size:11px;color:#1f7a33;letter-spacing:-0.652px;left:679.10px;top:309.00px;">0EPM_C02</span>
<svg style="position:absolute;left:954.3px;top:307px;" width="17" height="14" viewBox="0 0 17 14"><ellipse cx="8.6" cy="6.2" rx="7.4" ry="5.4" fill="none" stroke="#3a3a3a" stroke-width="1"/><path d="M4.6 10.6 C4.4 12 3.6 12.8 2.6 13.4 C5 13.6 6.6 12.8 7.8 11.6" fill="none" stroke="#3a3a3a" stroke-width="1"/><path d="M4 5.4 C4.8 3.6 6.6 2.8 8.6 2.8" fill="none" stroke="#3a3a3a" stroke-width="0.6" opacity="0.6"/></svg>
<span class="t" style="font-size:11px;color:#1f7a33;letter-spacing:-0.403px;left:977.70px;top:309.00px;">A4H</span>
<svg style="position:absolute;left:1078px;top:309px;" width="15" height="11.5" viewBox="0 0 15 12"><path d="M0.6 3 V9.2 C0.6 10.6 3.6 11.5 7.5 11.5 C11.4 11.5 14.4 10.6 14.4 9.2 V3 Z" fill="url(#gBlueH)" stroke="#2455b0" stroke-width="0.8"/><ellipse cx="7.5" cy="3" rx="6.9" ry="2.3" fill="#d6e7fb" stroke="#3468c0" stroke-width="0.8"/></svg>
<span class="t" style="font-size:11px;color:#1f7a33;letter-spacing:-0.764px;left:1113.20px;top:309.00px;">0EPM_ADSO3</span>
<span class="t" style="font-size:11px;color:#1f7a33;letter-spacing:0.012px;left:1408.60px;top:309.00px;">Comment Transfer valid. Ready for transfer.</span>
<div style="left:540px;top:324px;width:1349px;height:19px;background:#ffeb9c;"></div>
<div style="left:540px;top:343px;width:1349px;height:1px;background:#d4d4d4;"></div>
<div style="left:627px;top:324px;width:1px;height:19px;background:#d2d2d2;"></div>
<div style="left:677px;top:324px;width:1px;height:19px;background:#d2d2d2;"></div>
<div style="left:973px;top:324px;width:1px;height:19px;background:#d2d2d2;"></div>
<div style="left:1061px;top:324px;width:1px;height:19px;background:#d2d2d2;"></div>
<div style="left:1111px;top:324px;width:1px;height:19px;background:#d2d2d2;"></div>
<div style="left:1406px;top:324px;width:1px;height:19px;background:#d2d2d2;"></div>
<span class="t" style="font-size:11px;color:#9c5a00;letter-spacing:-0.058px;left:544.10px;top:329.00px;">BI2</span>
<svg style="position:absolute;left:644.5px;top:326px;" width="14.2" height="14.6" viewBox="0 0 15 15"><path d="M7 0.6 L14.2 3.4 V10.6 L7.6 14.6 L0.8 11 V4 Z" fill="#9fb4d2" stroke="#6f8cc0" stroke-width="0.8" stroke-linejoin="round"/><path d="M7 0.8 L14 3.5 L7.6 7 L1 4.1 Z" fill="#efe06c"/><path d="M3.2 3.2 L9.8 6 M5.4 2.2 L12 4.8" stroke="#fffbd6" stroke-width="1"/><path d="M1 4.4 L7.4 7.3 V14.2 L1 10.9 Z" fill="#c9d8ec"/><path d="M2 6 L6.4 8 V11.6 L2 9.4 Z" fill="#e2ebf6" opacity="0.8"/><path d="M7.8 7.3 L14 3.9 V10.5 L7.8 14.2 Z" fill="#6f8cc4"/></svg>
<span class="t" style="font-size:11px;color:#9c5a00;letter-spacing:-0.695px;left:679.10px;top:329.00px;">0EPM_C01</span>
<span class="t" style="font-size:11px;color:#9c5a00;letter-spacing:-0.403px;left:977.70px;top:329.00px;">A4H</span>
<svg style="position:absolute;left:1078px;top:329px;" width="15" height="11.5" viewBox="0 0 15 12"><path d="M0.6 3 V9.2 C0.6 10.6 3.6 11.5 7.5 11.5 C11.4 11.5 14.4 10.6 14.4 9.2 V3 Z" fill="url(#gBlueH)" stroke="#2455b0" stroke-width="0.8"/><ellipse cx="7.5" cy="3" rx="6.9" ry="2.3" fill="#d6e7fb" stroke="#3468c0" stroke-width="0.8"/></svg>
<span class="t" style="font-size:11px;color:#9c5a00;letter-spacing:-0.764px;left:1113.20px;top:329.00px;">0EPM_ADSO1</span>
<svg style="position:absolute;left:1387.5px;top:327px;" width="17" height="14" viewBox="0 0 17 14"><ellipse cx="8.6" cy="6.2" rx="7.4" ry="5.4" fill="none" stroke="#3a3a3a" stroke-width="1"/><path d="M4.6 10.6 C4.4 12 3.6 12.8 2.6 13.4 C5 13.6 6.6 12.8 7.8 11.6" fill="none" stroke="#3a3a3a" stroke-width="1"/><path d="M4 5.4 C4.8 3.6 6.6 2.8 8.6 2.8" fill="none" stroke="#3a3a3a" stroke-width="0.6" opacity="0.6"/></svg>
<span class="t" style="font-size:11px;color:#9c5a00;letter-spacing:0.054px;left:1408.60px;top:329.00px;">Warning. Existing comment of the target object will be overwritten. Ready for transfer.</span>
<div style="left:540px;top:344px;width:1349px;height:19px;background:#ffc7ce;"></div>
<div style="left:540px;top:363px;width:1349px;height:1px;background:#d4d4d4;"></div>
<div style="left:627px;top:344px;width:1px;height:19px;background:#d2d2d2;"></div>
<div style="left:677px;top:344px;width:1px;height:19px;background:#d2d2d2;"></div>
<div style="left:973px;top:344px;width:1px;height:19px;background:#d2d2d2;"></div>
<div style="left:1061px;top:344px;width:1px;height:19px;background:#d2d2d2;"></div>
<div style="left:1111px;top:344px;width:1px;height:19px;background:#d2d2d2;"></div>
<div style="left:1406px;top:344px;width:1px;height:19px;background:#d2d2d2;"></div>
<span class="t" style="font-size:11px;color:#a8001c;letter-spacing:-0.058px;left:544.10px;top:349.00px;">BI2</span>
<svg style="position:absolute;left:644.5px;top:345.5px;" width="16" height="15" viewBox="0 0 16 15"><path d="M0.6 7 V12 C0.6 13.3 3.4 14.3 7 14.3 C10.6 14.3 13.4 13.3 13.4 12 V7 Z" fill="url(#gBlueH)" stroke="#2c5db4" stroke-width="0.7"/><ellipse cx="7" cy="7" rx="6.4" ry="2.3" fill="#cfe3fa" stroke="#3b6fc4" stroke-width="0.7"/><path d="M6.4 1.6 L15 0.2 L10.6 6.8 H6.4 Z" fill="#3465c4" stroke="#27499a" stroke-width="0.5"/></svg>
<span class="t" style="font-size:11px;color:#a8001c;letter-spacing:-0.749px;left:679.10px;top:349.00px;">0EPM_DS02</span>
<svg style="position:absolute;left:954.3px;top:347px;" width="17" height="14" viewBox="0 0 17 14"><ellipse cx="8.6" cy="6.2" rx="7.4" ry="5.4" fill="none" stroke="#3a3a3a" stroke-width="1"/><path d="M4.6 10.6 C4.4 12 3.6 12.8 2.6 13.4 C5 13.6 6.6 12.8 7.8 11.6" fill="none" stroke="#3a3a3a" stroke-width="1"/><path d="M4 5.4 C4.8 3.6 6.6 2.8 8.6 2.8" fill="none" stroke="#3a3a3a" stroke-width="0.6" opacity="0.6"/></svg>
<span class="t" style="font-size:11px;color:#a8001c;letter-spacing:-0.403px;left:977.70px;top:349.00px;">A4H</span>
<svg style="position:absolute;left:1078px;top:349px;" width="15" height="11.5" viewBox="0 0 15 12"><path d="M0.6 3 V9.2 C0.6 10.6 3.6 11.5 7.5 11.5 C11.4 11.5 14.4 10.6 14.4 9.2 V3 Z" fill="url(#gBlueH)" stroke="#2455b0" stroke-width="0.8"/><ellipse cx="7.5" cy="3" rx="6.9" ry="2.3" fill="#d6e7fb" stroke="#3468c0" stroke-width="0.8"/></svg>
<span class="t" style="font-size:11px;color:#a8001c;letter-spacing:-0.764px;left:1113.20px;top:349.00px;">0EPM_ADSO2</span>
<span class="t" style="font-size:11px;color:#a8001c;letter-spacing:-0.084px;left:1408.60px;top:349.00px;">Comment transfer not valid. No matching comment chapters found. Please adjust templates.</span>
<svg style="position:absolute;left:530px;top:310px;" width="4.2" height="8" viewBox="0 0 4.2 8"><path d="M0 0 V8 L4.2 4.0 Z" fill="#3a3a3a"/></svg>
<div style="left:523px;top:601px;width:1384px;height:1px;background:#d4d4d4;"></div>
<div style="left:523px;top:602px;width:1384px;height:4.3px;background:#aaaaaa;"></div>
<span class="t" style="font-size:12px;color:#4a4a4a;letter-spacing:-0.010px;left:527.40px;top:618.00px;">Comment Language</span>
<div style="left:639px;top:613px;width:100px;height:22px;background:#fff;border:1px solid #a6a6a6;"></div>
<span class="t" style="font-size:12px;color:#4a4a4a;letter-spacing:-0.361px;left:644.10px;top:618.00px;">En (English)</span>
<svg style="position:absolute;left:725.5px;top:623px;" width="7.6" height="4" viewBox="0 0 7.6 4"><path d="M0 0 H7.6 L3.8 4 Z" fill="#404040"/></svg>
<svg style="position:absolute;left:1888px;top:616px;" width="15" height="15" viewBox="0 0 15 15"><rect x="0.5" y="0.5" width="14" height="14" rx="2.2" fill="#f4f4f4" stroke="#b0b0b0" stroke-width="1"/><path d="M2.4 14.2 H12.6" stroke="#b8b8b8" stroke-width="1"/><path d="M3.8 3.8 L11.2 11.2 M11.2 3.8 L3.8 11.2" stroke="#c2272d" stroke-width="2.5"/></svg>
<svg style="position:absolute;left:528.5px;top:641px;" width="14.2" height="14.6" viewBox="0 0 15 15"><path d="M7 0.6 L14.2 3.4 V10.6 L7.6 14.6 L0.8 11 V4 Z" fill="#9fb4d2" stroke="#6f8cc0" stroke-width="0.8" stroke-linejoin="round"/><path d="M7 0.8 L14 3.5 L7.6 7 L1 4.1 Z" fill="#efe06c"/><path d="M3.2 3.2 L9.8 6 M5.4 2.2 L12 4.8" stroke="#fffbd6" stroke-width="1"/><path d="M1 4.4 L7.4 7.3 V14.2 L1 10.9 Z" fill="#c9d8ec"/><path d="M2 6 L6.4 8 V11.6 L2 9.4 Z" fill="#e2ebf6" opacity="0.8"/><path d="M7.8 7.3 L14 3.9 V10.5 L7.8 14.2 Z" fill="#6f8cc4"/></svg>
<span class="t" style="font-size:14.5px;color:#000;font-weight:bold;letter-spacing:0.016px;left:549.10px;top:643.00px;">Source: 0EPM_C02 - Completed Purchase Orders (NW Demo EPM)</span>
<div style="left:523px;top:663px;width:673px;height:287.5px;background:#fff;"></div>
<div style="left:1196px;top:662px;width:16px;height:288px;background:#fafafa;"></div>
<div style="left:1197px;top:664px;width:15px;height:15px;background:#f4f4f4;border:1px solid #c8c8c8;"></div>
<svg style="position:absolute;left:1201px;top:668.8px;" width="7" height="4.2" viewBox="0 0 7 4.2"><path d="M0 4.2 H7 L3.5 0 Z" fill="#404040"/></svg>
<div style="left:1197px;top:703px;width:15px;height:222px;background:#f0f0f0;border:1px solid #b8b8b8;"></div>
<div style="left:1197px;top:935px;width:15px;height:15px;background:#f4f4f4;border:1px solid #c8c8c8;"></div>
<svg style="position:absolute;left:1201px;top:941px;" width="7" height="4" viewBox="0 0 7 4"><path d="M0 0 H7 L3.5 4 Z" fill="#404040"/></svg>
<div style="left:1212.5px;top:635.4px;width:4.9px;height:315px;background:#a9a9a9;"></div>
<span class="t" style="font-size:14.67px;color:#000;font-weight:bold;font-style:italic;left:539.10px;top:686.00px;">1</span>
<span class="t" style="font-size:14.67px;color:#000;font-weight:bold;font-style:italic;letter-spacing:-0.111px;left:567.40px;top:686.00px;">Objective</span>
<div style="left:567px;top:685px;width:1px;height:16px;background:#000;"></div>
<span class="t" style="font-size:14.0px;color:#000;letter-spacing:-0.016px;left:538.60px;top:729.00px;">This InfoCube contains delivery related indicators and key figures for purchase order items. These</span>
<span class="t" style="font-size:14.0px;color:#000;letter-spacing:-0.026px;left:538.60px;top:752.00px;">indicators and key figures are based on the associated confirmation and goods receipt documents.</span>
<span class="t" style="font-size:14.67px;color:#000;font-weight:bold;font-style:italic;left:538.60px;top:817.00px;">2</span>
<span class="t" style="font-size:14.67px;color:#000;font-weight:bold;font-style:italic;letter-spacing:-0.008px;left:566.60px;top:817.00px;">Business Aspects</span>
<span class="t" style="font-size:14.0px;color:#000;letter-spacing:-0.011px;left:538.60px;top:860.00px;">The InfoCube provides insight into the delivery service of vendors by exploring deviations across the</span>
<span class="t" style="font-size:14.0px;color:#000;letter-spacing:-0.016px;left:538.60px;top:883.00px;">entire delivery process, between purchase orders, confirmations and goods receipts for example. It can</span>
<span class="t" style="font-size:14.0px;color:#000;letter-spacing:-0.013px;left:538.60px;top:905.00px;">therefore be used to compare delivery KPIs, such as delivery scores (time, quantity and quality reliability)</span>
<span class="t" style="font-size:14.0px;color:#000;letter-spacing:-0.054px;left:538.60px;top:927.00px;">and quantity and delivery date deviations.</span>
<svg style="position:absolute;left:1223px;top:643px;" width="15" height="12" viewBox="0 0 15 12"><path d="M0.6 3 V9.2 C0.6 10.6 3.6 11.5 7.5 11.5 C11.4 11.5 14.4 10.6 14.4 9.2 V3 Z" fill="url(#gBlueH)" stroke="#2455b0" stroke-width="0.8"/><ellipse cx="7.5" cy="3" rx="6.9" ry="2.3" fill="#d6e7fb" stroke="#3468c0" stroke-width="0.8"/></svg>
<span class="t" style="font-size:14.5px;color:#000;font-weight:bold;letter-spacing:0.027px;left:1243.70px;top:643.00px;">Target: 0EPM_ADSO3 - ADSO for Open Purchase Orders ( EPM NW Demo )</span>
<div style="left:1218px;top:663px;width:673px;height:287.5px;background:#fff;"></div>
<div style="left:1892px;top:664px;width:15px;height:15px;background:#f6f6f6;border:1px solid #d6d6d6;"></div>
<svg style="position:absolute;left:1896px;top:668.8px;" width="7" height="4.2" viewBox="0 0 7 4.2"><path d="M0 4.2 H7 L3.5 0 Z" fill="#b0b0b0"/></svg>
<div style="left:1892px;top:935px;width:15px;height:15px;background:#f6f6f6;border:1px solid #d6d6d6;"></div>
<svg style="position:absolute;left:1896px;top:941px;" width="7" height="4" viewBox="0 0 7 4"><path d="M0 0 H7 L3.5 4 Z" fill="#b4b4b4"/></svg>
<span class="t" style="font-size:14.67px;color:#000;font-weight:bold;font-style:italic;left:1233.70px;top:716.00px;">1</span>
<span class="t" style="font-size:14.67px;color:#000;font-weight:bold;font-style:italic;letter-spacing:-0.048px;left:1261.60px;top:716.00px;">Objective</span>
<span class="t" style="font-size:14.67px;color:#000;font-weight:bold;font-style:italic;left:1232.90px;top:797.00px;">2</span>
<span class="t" style="font-size:14.67px;color:#000;font-weight:bold;font-style:italic;letter-spacing:0.019px;left:1260.90px;top:797.00px;">Business Aspects</span>
<div style="left:1759px;top:973px;width:150px;height:25px;background:#f8f8f8;border:1px solid #c8c8c8;"></div>
<span class="t" style="font-size:11px;color:#a0a0a0;letter-spacing:0.128px;left:1799.40px;top:981.00px;">Start Transfer</span>
<div style="left:0px;top:1010px;width:1920px;height:29px;background:#f8f8f8;"></div>
<div style="left:0px;top:1010px;width:1920px;height:1px;background:#ffffff;"></div>
<div style="left:0px;top:1038px;width:1920px;height:1px;background:#ffffff;"></div>
<div style="left:0px;top:1010px;width:1px;height:29px;background:#8a8a8a;"></div>
<div style="left:1919px;top:1010px;width:1px;height:29px;background:#8a8a8a;"></div>
<svg style="position:absolute;left:6.7px;top:1015px;" width="15" height="16" viewBox="0 0 15 16"><path d="M0.6 2.4 L4.4 0.5 L13.6 2.6 V14.4 L5.6 15.6 L0.6 12.6 Z" fill="#bdbfc1" stroke="#6c7073" stroke-width="0.9"/><path d="M0.6 2.4 L4.4 0.5 L13.6 2.6 L5.6 4.4 Z" fill="#dcdee0" stroke="#6c7073" stroke-width="0.6"/><path d="M5.6 4.4 L13.6 2.6 V14.4 L5.6 15.6 Z" fill="#e4e6e7" stroke="#6c7073" stroke-width="0.7"/><path d="M6.8 6.2 L12.6 5.2 M6.8 8 L12.6 7 M6.8 9.8 L12.6 8.8 M6.8 11.6 L12.6 10.6" stroke="#707477" stroke-width="1"/><rect x="8.4" y="12.6" width="4.2" height="1.3" fill="#55595c"/></svg>
<div style="left:31px;top:1013px;width:107px;height:23px;background:#fff;border:1px solid #ababab;"></div>
<span class="t" style="font-size:11px;color:#3c3c3c;letter-spacing:-0.164px;left:50.20px;top:1020.00px;">Select system</span>
<span class="t" style="font-size:11px;color:#2a2a2a;font-weight:bold;letter-spacing:1.038px;left:144.10px;top:1019.00px;">BI2</span>
<span class="t" style="font-size:11px;color:#3c3c3c;letter-spacing:-0.349px;left:168.70px;top:1019.00px;">(BW)</span>
<svg style="position:absolute;left:200.5px;top:1015px;" width="17" height="16" viewBox="0 0 17 16"><path d="M1 15.5 L5 11.5 M11.5 5 L16 0.8" stroke="#5d6266" stroke-width="1.3" stroke-linecap="round"/><g transform="rotate(-45 8.5 8.2)"><rect x="3.2" y="5.4" width="5" height="5.6" rx="1.2" fill="#3d9fe0" stroke="#2a6fae" stroke-width="0.7"/><rect x="9" y="5.4" width="5" height="5.6" rx="1.2" fill="#57b4ee" stroke="#2a6fae" stroke-width="0.7"/></g></svg>
<div style="left:226px;top:1013px;width:75px;height:23px;background:#fff;border:1px solid #ababab;"></div>
<span class="t" style="font-size:11px;color:#3c3c3c;letter-spacing:-0.147px;left:236.20px;top:1020.00px;">Disconnect</span>
<div style="left:1649px;top:1012px;width:27px;height:24px;background:#fff;border:1px solid #ababab;"></div>
<svg style="position:absolute;left:1655.8px;top:1015.6px;" width="12" height="16" viewBox="0 0 12 16"><path d="M0.5 0.5 H8 L11.5 4 V15.5 H0.5 Z" fill="#fcfcfc" stroke="#b8b8b8" stroke-width="0.8"/><path d="M2 5.5 H9.5 M2 8 H9.5 M2 10.5 H9.5 M2 13 H9.5 M4.5 4 V14 M7.5 4 V14" stroke="#d0d0d0" stroke-width="0.7"/><path d="M7.2 8.4 L8.6 9.8 L10.8 7 M7.2 12.4 L8.6 13.8 L10.8 11" fill="none" stroke="#5fb4d8" stroke-width="1.1"/></svg>
<div style="left:1682px;top:1012px;width:27px;height:24px;background:#fff;border:1px solid #ababab;"></div>
<svg style="position:absolute;left:1688.6px;top:1017.3px;" width="12.8" height="12.8" viewBox="0 0 26 26.2"><path d="M5.5,16.7 C2.5,13.5 0.5,10.5 1,7.5 C1.6,3.6 5.5,1.6 10,2.2 L12.6,2.6 L13.4,0.4 L18,7.9 L8.8,9.6 L10.8,7.3 C7.5,6.6 4.8,8 4.4,10.8 C4.2,12.6 4.6,14.6 5.5,16.7 Z" fill="#1a72c9"/><path d="M5.5,16.7 C2.5,13.5 0.5,10.5 1,7.5 C1.6,3.6 5.5,1.6 10,2.2 L12.6,2.6 L13.4,0.4 L18,7.9 L8.8,9.6 L10.8,7.3 C7.5,6.6 4.8,8 4.4,10.8 C4.2,12.6 4.6,14.6 5.5,16.7 Z" fill="#2ea0ea" transform="rotate(180 13 13.1)"/></svg>
<svg style="position:absolute;left:1716.5px;top:1015px;" width="17" height="16" viewBox="0 0 17 16"><path d="M0.6 2.6 V11.6 C0.6 12.8 3 13.6 6 13.6 C9 13.6 11.4 12.8 11.4 11.6 V2.6 Z" fill="url(#gGrayH)" stroke="#a4a9ad" stroke-width="0.7"/><ellipse cx="6" cy="2.6" rx="5.4" ry="2" fill="#eceeef" stroke="#a4a9ad" stroke-width="0.7"/><path d="M0.6 6 C0.6 7.2 3 8 6 8 C9 8 11.4 7.2 11.4 6 M0.6 9 C0.6 10.2 3 11 6 11 C9 11 11.4 10.2 11.4 9" fill="none" stroke="#a4a9ad" stroke-width="0.7"/><rect x="6.8" y="5.8" width="9" height="9" rx="0.8" fill="#2f8fdc" stroke="#1f6bb4" stroke-width="0.6"/><rect x="8.6" y="6.4" width="5.4" height="3" fill="#eaf4fc"/><rect x="9.2" y="11" width="4.2" height="3.6" fill="#eaf4fc"/><rect x="10" y="11.6" width="1.2" height="2.4" fill="#2f8fdc"/></svg>
<span class="t" style="font-size:11px;color:#3c3c3c;letter-spacing:-0.528px;left:1735.70px;top:1018.00px;">SQLite</span>
<svg style="position:absolute;left:1775.5px;top:1015px;" width="15" height="16" viewBox="0 0 15 16"><path d="M0.6 15 C0.6 11 2.6 9.6 7.2 9.6 C11.8 9.6 13.8 11 13.8 15 Z" fill="#d8dcf4" stroke="#6a6fb0" stroke-width="0.8"/><path d="M1 13.4 H13.4 V15 H1 Z" fill="#5a5fae"/><ellipse cx="7.2" cy="5.6" rx="3.3" ry="3.9" fill="#f6d2a6" stroke="#c89a66" stroke-width="0.5"/><path d="M3.6 5.6 C3 1.8 5 0.4 7.4 0.4 C9.8 0.4 11.4 2 10.8 5.4 C10 3.6 9 3 7.2 3.2 C5.4 3.4 4.4 4 3.6 5.6Z" fill="#a8681f"/></svg>
<span class="t" style="font-size:11px;color:#3c3c3c;letter-spacing:-0.165px;left:1793.70px;top:1018.00px;">Admin (Full administrator)</span>
<div style="left:0px;top:1039px;width:1920px;height:9px;background:linear-gradient(90deg,#0b1a29 0,#0b1a29 700px,#1c232b 850px,#2b2b2b 960px,#2c2c2c 1030px,#202020 1100px,#1d1d1d 1920px);"></div>
<div style="left:0px;top:1039px;width:1920px;height:1px;background:#7e7e7e;"></div>
<div style="left:48px;top:1040px;width:344px;height:8px;background:#f0f0f0;"></div>
<div style="left:1031px;top:1040px;width:48px;height:8px;background:#4c4c4c;"></div>
<div style="left:1915px;top:1039px;width:1px;height:9px;background:#8a8a8a;"></div>
<span class="t" style="left:1819.5px;top:1044.6px;font-size:11.5px;color:#fff;line-height:11.5px;">16:00</span>
</div>
</body></html>
